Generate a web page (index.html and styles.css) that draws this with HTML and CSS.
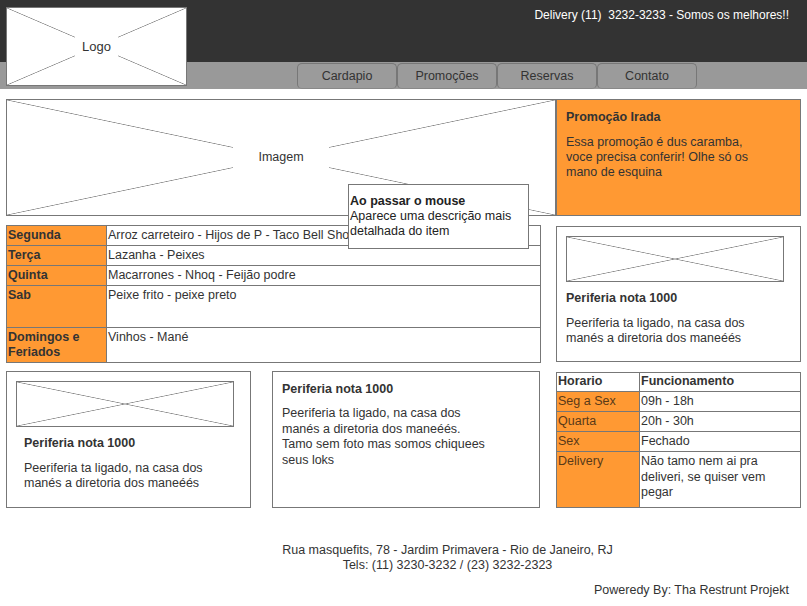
FILE: index.html
```html
<!DOCTYPE html>
<html lang="pt-BR">
<head>
<meta charset="utf-8">
<title>Restaurante</title>
<link rel="stylesheet" href="styles.css">
</head>
<body>
<header class="header">
  <div class="ph logo"><span class="ph-label logo-label">Logo</span></div>
  <div class="header-right">
    <p class="delivery">Delivery (11)&nbsp; 3232-3233 - Somos os melhores!!</p>
    <nav class="nav">
      <a class="nav-btn" href="#">Cardapio</a>
      <a class="nav-btn" href="#">Promoções</a>
      <a class="nav-btn" href="#">Reservas</a>
      <a class="nav-btn" href="#">Contato</a>
    </nav>
  </div>
</header>

<main class="main">
  <section class="row row1">
    <div class="ph hero"><span class="ph-label hero-label">Imagem</span></div>
    <div class="promo">
      <p class="title">Promoção Irada</p>
      <p>Essa promoção é dus caramba,<br>voce precisa conferir! Olhe só os<br>mano de esquina</p>
    </div>
  </section>

  <section class="row row2">
    <table class="menu">
      <tr class="r20"><th>Segunda</th><td>Arroz carreteiro - Hijos de P - Taco Bell Show</td></tr>
      <tr class="r20"><th>Terça</th><td>Lazanha - Peixes</td></tr>
      <tr class="r20"><th>Quinta</th><td>Macarrones - Nhoq - Feijão podre</td></tr>
      <tr class="r42"><th>Sab</th><td>Peixe frito - peixe preto</td></tr>
      <tr class="r35"><th>Domingos e<br>Feriados</th><td>Vinhos - Mané</td></tr>
    </table>
    <div class="card card-right">
      <div class="ph thumb"></div>
      <p class="title">Periferia nota 1000</p>
      <p>Peeriferia ta ligado, na casa dos<br>manés a diretoria dos maneéés</p>
    </div>
  </section>

  <section class="row row3">
    <div class="card card-left">
      <div class="ph thumb"></div>
      <div class="card-text">
        <p class="title">Periferia nota 1000</p>
        <p>Peeriferia ta ligado, na casa dos<br>manés a diretoria dos maneéés</p>
      </div>
    </div>
    <div class="card card-mid">
      <p class="title">Periferia nota 1000</p>
      <p class="loose">Peeriferia ta ligado, na casa dos<br>manés a diretoria dos maneéés.<br>Tamo sem foto mas somos chiquees<br>seus loks</p>
    </div>
    <table class="hours">
      <tr class="h19"><th>Horario</th><th>Funcionamento</th></tr>
      <tr class="h20"><td class="day">Seg a Sex</td><td>09h - 18h</td></tr>
      <tr class="h20"><td class="day">Quarta</td><td>20h - 30h</td></tr>
      <tr class="h20"><td class="day">Sex</td><td>Fechado</td></tr>
      <tr class="h56"><td class="day">Delivery</td><td class="loose">Não tamo nem ai pra<br>deliveri, se quiser vem<br>pegar</td></tr>
    </table>
  </section>

  <div class="tooltip">
    <p class="tip-title">Ao passar o mouse</p>
    <p>Aparece uma descrição mais<br>detalhada do item</p>
  </div>
</main>

<footer class="footer">
  <p class="address">Rua masquefits, 78 - Jardim Primavera - Rio de Janeiro, RJ<br>Tels: (11) 3230-3232 / (23) 3232-2323</p>
  <p class="powered">Poweredy By: Tha Restrunt Projekt</p>
</footer>
</body>
</html>
```

FILE: styles.css
```css
* { box-sizing: border-box; }

body {
  margin: 0;
  font-family: "Liberation Sans", Arial, sans-serif;
  font-size: 12.5px;
  line-height: 15px;
  color: #333;
  background: #fff;
}

p { margin: 0; }

/* placeholder boxes with an X */
.ph {
  display: flex;
  align-items: center;
  justify-content: center;
  border: 1px solid #777;
  background:
    linear-gradient(to top right, transparent calc(50% - 0.7px), #8a8a8a 50%, transparent calc(50% + 0.7px)),
    linear-gradient(to bottom right, transparent calc(50% - 0.7px), #8a8a8a 50%, transparent calc(50% + 0.7px)),
    #fff;
}

.ph-label {
  background: #fff;
  color: #333;
}

/* header */
.header {
  display: flex;
  height: 89px;
  background: linear-gradient(#333 0, #333 62px, #999 62px, #999 89px);
}

.logo {
  width: 181px;
  height: 79px;
  margin: 7px 0 0 6px;
  flex: none;
}

.logo-label {
  padding: 4px 7px;
  font-size: 13px;
}

.header-right {
  flex: 1;
  display: flex;
  flex-direction: column;
}

.delivery {
  color: #fff;
  font-size: 12px;
  text-align: right;
  padding: 8px 18px 0 0;
}

.nav {
  margin-top: auto;
  display: flex;
  padding-left: 110px;
}

.nav-btn {
  width: 100px;
  height: 26px;
  margin-right: 0;
  border: 1px solid #777;
  border-bottom-color: #888;
  border-radius: 5px;
  background: #9b9b9b;
  display: flex;
  align-items: center;
  justify-content: center;
  color: #333;
  text-decoration: none;
}

/* main */
.main {
  position: relative;
  padding: 10px 6px 0 6px;
}

.row { display: flex; align-items: flex-start; }

.row1 { height: 117px; }

.hero {
  width: 550px;
  height: 117px;
}

.hero-label {
  padding: 4px 25px;
}

.promo {
  width: 245px;
  height: 117px;
  background: #f93;
  border: 1px solid #777;
  padding: 10px 9px;
}

.title {
  font-weight: bold;
  margin-bottom: 10px;
}

.row2 { margin-top: 9px; }

/* tables */
.menu, .hours {
  border-collapse: collapse;
}

.menu {
  width: 535px;
}

.menu th, .menu td, .hours th, .hours td {
  border: 1px solid #777;
  padding: 2px 1px 0 1px;
  text-align: left;
  vertical-align: top;
}

.menu th {
  width: 100px;
  background: #f93;
  font-weight: bold;
  color: #333;
}

.menu td { background: #fff; }

.r20 th, .r20 td { height: 20px; }
.r42 th, .r42 td { height: 42px; }
.r35 th, .r35 td { height: 35px; }

.card {
  border: 1px solid #777;
  background: #fff;
}

.card-right {
  width: 245px;
  height: 136px;
  margin: 1px 0 0 auto;
  padding: 9px 16px 0 9px;
}

.thumb {
  height: 46px;
  margin-bottom: 9px;
}

.row3 { margin-top: 8px; }

.card-left {
  width: 245px;
  height: 137px;
  padding: 9px 16px 0 9px;
}

.card-text { padding-left: 8px; }

.card-mid {
  width: 268px;
  height: 137px;
  margin-left: 21px;
  padding: 10px 9px;
}

.card-mid .title { margin-bottom: 9px; }

.loose { line-height: 15.6px; }

.hours {
  width: 245px;
  margin: 1px 0 0 auto;
}

.hours th {
  font-weight: bold;
  background: #fff;
}

.hours th:first-child, .hours td.day {
  width: 83px;
}

.hours td.day {
  background: #f93;
  color: #5a3a18;
}

.h19 th, .h19 td { height: 19px; padding-top: 1px; }
.h20 th, .h20 td { height: 20px; }
.h56 th, .h56 td { height: 56px; }

/* tooltip overlay */
.tooltip {
  position: absolute;
  left: 348px;
  top: 95px;
  width: 181px;
  height: 65px;
  background: #fff;
  border: 1px solid #777;
  padding: 9px 1px 0 1px;
  color: #222;
}

.tip-title { font-weight: bold; }

/* footer */
.footer { margin-top: 35px; }

.address {
  text-align: center;
  padding-left: 88px;
}

.powered {
  text-align: right;
  padding-right: 18px;
  margin-top: 10px;
}
```
